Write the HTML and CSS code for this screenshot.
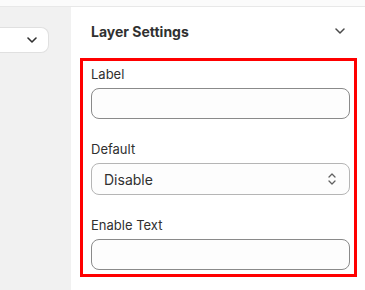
FILE: index.html
```html
<!DOCTYPE html>
<html lang="en">
<head>
  <meta charset="UTF-8">
  <title>Layer Settings</title>
  <link rel="stylesheet" href="styles.css">
</head>
<body>
  <div class="topbar"></div>

  <div class="main">
    <!-- left column, mostly cut off -->
    <div class="side">
      <div class="mini-select">
        <svg width="10" height="6" viewBox="0 0 10 6"><path d="M1 1l4 4 4-4" fill="none" stroke="#303030" stroke-width="1.6" stroke-linecap="round" stroke-linejoin="round"/></svg>
      </div>
    </div>

    <div class="panel">
      <div class="panel-head">
        <span class="panel-title">Layer Settings</span>
        <svg width="10" height="6" viewBox="0 0 10 6"><path d="M1 1l4 4 4-4" fill="none" stroke="#4a4a4a" stroke-width="1.5" stroke-linecap="round" stroke-linejoin="round"/></svg>
      </div>

      <div class="fields">
        <div class="field">
          <label>Label</label>
          <div class="input"></div>
        </div>
        <div class="field">
          <label>Default</label>
          <div class="input select">
            <span>Disable</span>
            <svg width="10" height="14" viewBox="0 0 10 14"><path d="M2 5l3-3 3 3M2 9l3 3 3-3" fill="none" stroke="#616161" stroke-width="1.3" stroke-linecap="round" stroke-linejoin="round"/></svg>
          </div>
        </div>
        <div class="field">
          <label>Enable Text</label>
          <div class="input"></div>
        </div>
      </div>
    </div>
  </div>
</body>
</html>
```

FILE: styles.css
```css
/* General styles */
body {
  margin: 0;
  font-family: 'Inter', 'Liberation Sans', sans-serif;
  color: #303030;
  background: #fff;
  height: 290px;
  overflow: hidden;
}

.topbar {
  height: 6px;
  background: #fbfbfb;
  border-bottom: 1px solid #e8e8e8;
}

.main {
  display: flex;
  height: 283px;
}

.side {
  width: 71px;
  flex-shrink: 0;
  background: #f1f1f1;
  padding-top: 20px;
  box-sizing: border-box;
}

.mini-select {
  width: 49px;
  height: 26px;
  box-sizing: border-box;
  background: #fff;
  border: 1px solid #e0e0e0;
  border-left: none;
  border-radius: 0 8px 8px 0;
  display: flex;
  align-items: center;
  justify-content: flex-end;
  padding-right: 11px;
}

.panel {
  flex: 1;
  background: #fff;
}

.panel-head {
  height: 48px;
  display: flex;
  align-items: center;
  justify-content: space-between;
  padding: 0 20px 0 20px;
}

.panel-title {
  font-size: 14px;
  font-weight: 650;
  color: #303030;
}

.fields {
  margin: 3px 8px 0 9px;
  border: 3px solid #ff0000;
  padding: 3px 4px 4px 8px;
  display: flex;
  flex-direction: column;
  gap: 20px;
}

.field label {
  display: block;
  font-size: 13px;
  line-height: 20px;
  margin-bottom: 4px;
  color: #303030;
}

.input {
  height: 31px;
  box-sizing: border-box;
  border: 1px solid #8a8a8a;
  border-radius: 8px;
  background: #fdfdfd;
}

.select {
  height: 32px;
  display: flex;
  align-items: center;
  justify-content: space-between;
  padding: 0 12px 0 12px;
  font-size: 14px;
  border-color: #b5b5b5;
}
```
